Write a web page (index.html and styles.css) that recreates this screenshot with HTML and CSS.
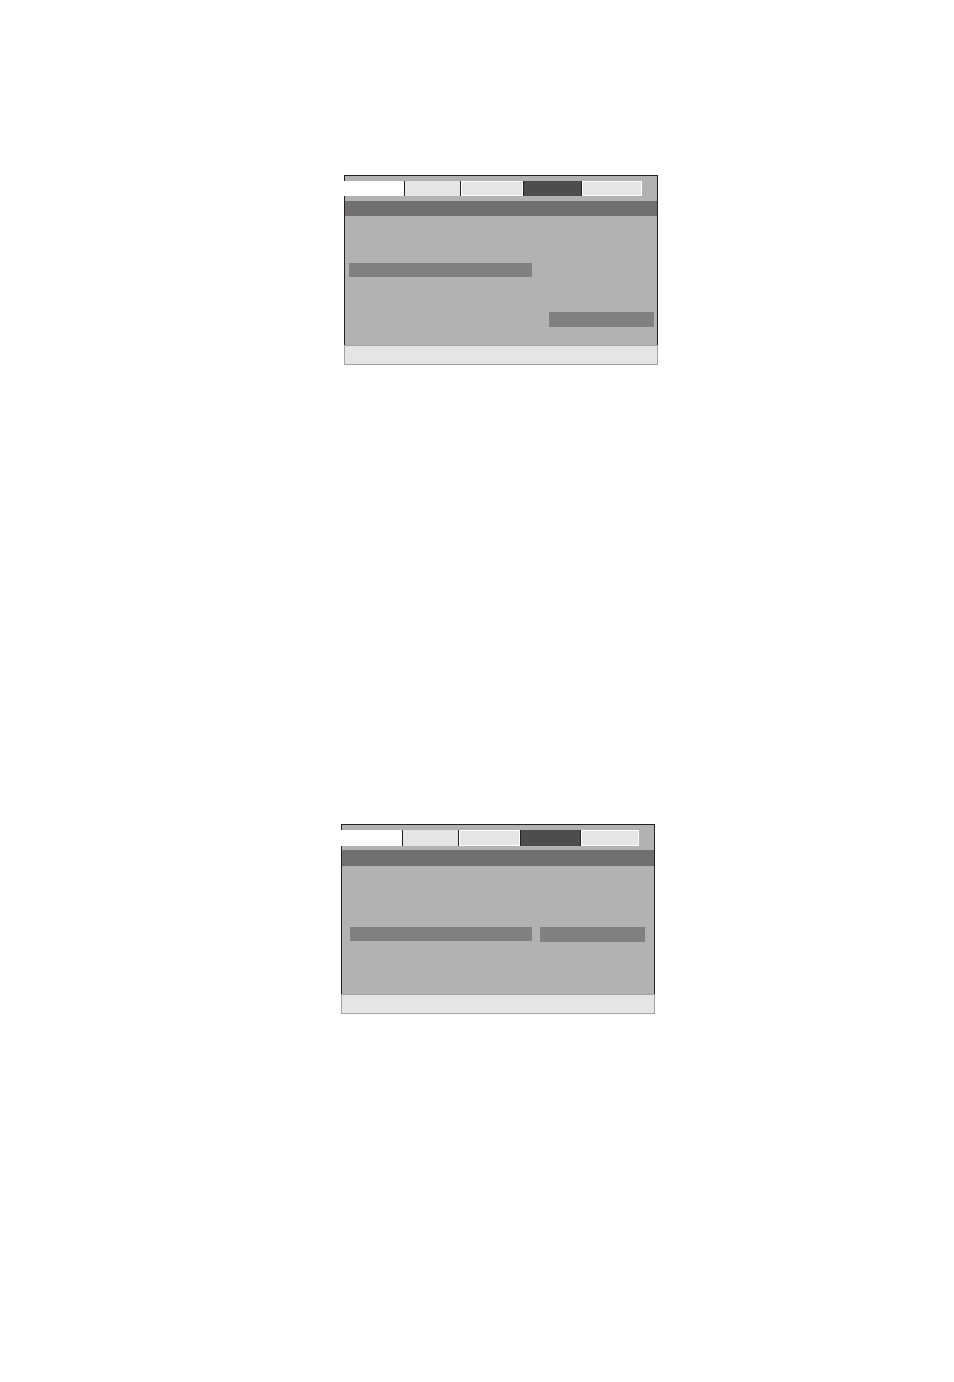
FILE: index.html
```html
<!DOCTYPE html>
<html>
<head>
<meta charset="utf-8">
<link rel="stylesheet" href="styles.css">
</head>
<body>
<div class="page">
  <section class="osd osd-one">
    <div class="frame">
      <div class="tabs">
        <div class="tab tab-a"></div>
        <div class="tab tab-b"></div>
        <div class="tab tab-c"></div>
        <div class="tab tab-d"></div>
        <div class="tab tab-e"></div>
      </div>
      <div class="title-bar"></div>
      <div class="content content-one">
        <div class="item item-wide"></div>
        <div class="item item-short"></div>
      </div>
    </div>
    <div class="footer"></div>
  </section>

  <section class="osd osd-two">
    <div class="frame">
      <div class="tabs">
        <div class="tab tab-a"></div>
        <div class="tab tab-b"></div>
        <div class="tab tab-c"></div>
        <div class="tab tab-d"></div>
        <div class="tab tab-e"></div>
      </div>
      <div class="title-bar"></div>
      <div class="content content-two">
        <div class="item item-wide"></div>
        <div class="item item-short"></div>
      </div>
    </div>
    <div class="footer"></div>
  </section>
</div>
</body>
</html>
```
FILE: styles.css
```css
html, body {
  margin: 0;
  padding: 0;
  background: #ffffff;
  font-family: "Liberation Sans", Arial, sans-serif;
}

.page {
  display: flex;
  flex-direction: column;
  align-items: flex-start;
}

.osd {
  width: 314px;
  display: flex;
  flex-direction: column;
}

.osd-one {
  margin-top: 175px;
  margin-left: 344px;
}

.osd-two {
  margin-top: 459px;
  margin-left: 341px;
}

.frame {
  background: #b2b2b2;
  border: 1px solid #231f20;
  border-bottom: none;
  display: flex;
  flex-direction: column;
}

.tabs {
  display: flex;
  height: 15px;
  margin-top: 5px;
  margin-left: -1px;
}

.osd-two .tabs {
  height: 16px;
}

.tab {
  box-sizing: border-box;
  height: 100%;
  background: #e5e5e5;
}

.tab-a {
  width: 61px;
  background: #ffffff;
  border-right: 1px solid #231f20;
}

.tab-b {
  width: 56px;
  border-right: 1px solid #231f20;
}

.tab-c {
  width: 63px;
  border-right: 1px solid #231f20;
  box-shadow: inset 1px 1px 0 #ffffff, inset 0 -1px 0 #ffffff, inset -1px 0 0 #ffffff;
}

.tab-d {
  width: 58px;
  background: #4d4d4d;
  border-right: 1px solid #231f20;
}

.tab-e {
  width: 60px;
  border: 1px solid #ffffff;
}

.osd-two .tab-a { width: 62px; }
.osd-two .tab-b { width: 56px; }
.osd-two .tab-c { width: 62px; }
.osd-two .tab-d { width: 60px; }
.osd-two .tab-e { width: 58px; }

.title-bar {
  height: 15px;
  margin-top: 5px;
  background: #72706e;
}

.osd-two .title-bar {
  height: 16px;
  margin-top: 4px;
}

.content {
  box-sizing: border-box;
  height: 129px;
}

.item {
  background: #808080;
}

.content-one {
  display: flex;
  flex-direction: column;
  align-items: flex-start;
  padding: 47px 0 0 4px;
}

.content-one .item-wide {
  width: 183px;
  height: 14px;
}

.content-one .item-short {
  width: 105px;
  height: 15px;
  margin-top: 35px;
  margin-left: 200px;
}

.content-two {
  height: 128px;
  display: flex;
  align-items: flex-start;
  gap: 8px;
  padding: 61px 0 0 8px;
}

.content-two .item-wide {
  width: 182px;
  height: 14px;
}

.content-two .item-short {
  width: 105px;
  height: 15px;
}

.footer {
  box-sizing: border-box;
  height: 20px;
  background: #e5e5e5;
  border: 1px solid #a3a3a3;
}
```
